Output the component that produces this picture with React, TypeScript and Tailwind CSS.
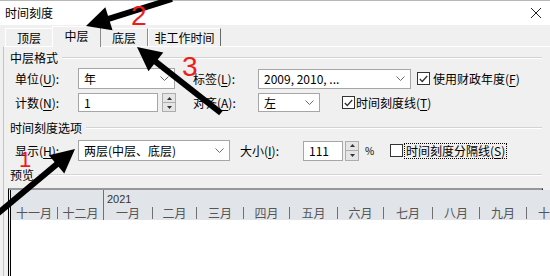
import React from "react";

const LABEL = "w-[63px] shrink-0 whitespace-nowrap text-[12px] leading-none text-black";

const MONTHS = [
  { t: "十一月", w: 46 },
  { t: "十二月", w: 46 },
  { t: "一月", w: 49, year: "2021" },
  { t: "二月", w: 44 },
  { t: "三月", w: 47 },
  { t: "四月", w: 46 },
  { t: "五月", w: 48 },
  { t: "六月", w: 46 },
  { t: "七月", w: 49 },
  { t: "八月", w: 47 },
  { t: "九月", w: 47 },
  { t: "十月", w: 47 },
];

function U({ c }: { c: string }) {
  return <span className="underline underline-offset-2">{c}</span>;
}

function Chevron() {
  return (
    <svg width="9" height="5" viewBox="0 0 9 5" className="shrink-0">
      <polyline points="0.5,0.5 4.5,4.5 8.5,0.5" fill="none" stroke="#6a6a6a" strokeWidth="1" />
    </svg>
  );
}

function Combo({ className, text }: { className: string; text: string }) {
  return (
    <div className={`flex shrink-0 items-center justify-between border border-[#a6a6a6] bg-white px-[5px] ${className}`}>
      <span className="whitespace-nowrap text-[12px] leading-none text-black">{text}</span>
      <Chevron />
    </div>
  );
}

function Spin({ className }: { className: string }) {
  return (
    <div className={`flex shrink-0 flex-col border border-[#adadad] bg-[#e5e5e5] ${className}`}>
      <div className="flex flex-1 items-center justify-center border-b border-[#adadad]">
        <svg width="5" height="3" viewBox="0 0 5 3">
          <polygon points="2.5,0 5,3 0,3" fill="#333" />
        </svg>
      </div>
      <div className="flex flex-1 items-center justify-center">
        <svg width="5" height="3" viewBox="0 0 5 3">
          <polygon points="0,0 5,0 2.5,3" fill="#333" />
        </svg>
      </div>
    </div>
  );
}

function Check({ checked, className }: { checked?: boolean; className: string }) {
  return (
    <span className={`flex h-[13px] w-[13px] shrink-0 items-center justify-center border border-[#333] bg-white ${className}`}>
      {checked && (
        <svg width="9" height="8" viewBox="0 0 9 8">
          <polyline points="0.8,4 3.3,6.5 8.2,1" fill="none" stroke="#333" strokeWidth="1.3" />
        </svg>
      )}
    </span>
  );
}

function GroupTitle({ text, className }: { text: string; className: string }) {
  return (
    <div className={`flex h-[14px] items-center pl-[6px] pr-[8px] ${className}`}>
      <span className="whitespace-nowrap text-[12px] leading-none text-black">{text}</span>
      <div className="ml-[4px] h-[2px] flex-1 border-t border-[#d3d3d3] bg-white" />
    </div>
  );
}

function Arrow({ x1, y1, x2, y2 }: { x1: number; y1: number; x2: number; y2: number }) {
  const dx = x2 - x1;
  const dy = y2 - y1;
  const len = Math.hypot(dx, dy);
  const ux = dx / len;
  const uy = dy / len;
  const hl = 24;
  const hw = 12;
  const bx = x2 - ux * hl;
  const by = y2 - uy * hl;
  const px = -uy;
  const py = ux;
  const pts = `${x2},${y2} ${bx + px * hw},${by + py * hw} ${bx - px * hw},${by - py * hw}`;
  return (
    <g>
      <line x1={x1} y1={y1} x2={bx + ux * 2} y2={by + uy * 2} stroke="#000" strokeWidth="6" />
      <polygon points={pts} fill="#000" />
    </g>
  );
}

export default function App() {
  return (
    <div className="relative flex h-[276px] w-[550px] flex-col overflow-hidden bg-[#f0f0f0] font-['Noto_Sans_CJK_SC',sans-serif]">
      {/* Title bar */}
      <div className="flex h-[25px] shrink-0 items-center justify-between border-t border-[#b8b8b8] bg-white pl-[5px] pr-[9px]">
        <span className="text-[12px] leading-none text-black">时间刻度</span>
        <svg width="10" height="10" viewBox="0 0 10 10">
          <line x1="0" y1="0" x2="10" y2="10" stroke="#222" strokeWidth="1" />
          <line x1="10" y1="0" x2="0" y2="10" stroke="#222" strokeWidth="1" />
        </svg>
      </div>

      {/* Tabs */}
      <div className="relative z-10 flex h-[21px] shrink-0 items-end pl-[5px]">
        <div className="flex h-[18px] w-[47px] items-center justify-center border-l border-t border-white text-[12px] leading-none text-black">
          顶层
        </div>
        <div className="-mb-px flex h-[21px] w-[49px] items-start justify-center border-l border-t border-r border-white border-r-[#8c8c8c] bg-[#f0f0f0] pt-[3px] text-[12px] leading-none text-black">
          中层
        </div>
        <div className="flex h-[18px] w-[47px] items-center justify-center border-t border-r border-white border-r-[#8c8c8c] text-[12px] leading-none text-black">
          底层
        </div>
        <div className="flex h-[18px] w-[73px] items-center justify-center border-l border-t border-r border-white border-r-[#696969] text-[12px] leading-none text-black">
          非工作时间
        </div>
      </div>

      {/* Tab panel */}
      <div className="ml-[3px] flex flex-1 flex-col border-l border-t border-[#c4c4c4] border-t-white">
        <GroupTitle text="中层格式" className="mt-[4px]" />

        <div className="mt-[3px] flex h-[21px] items-center pl-[11px]">
          <span className={LABEL}>
            单位(<U c="U" />):
          </span>
          <Combo className="h-[21px] w-[97px]" text="年" />
          <span className="ml-[18px] w-[65px] shrink-0 whitespace-nowrap text-[12px] leading-none text-black">
            标签(<U c="L" />):
          </span>
          <Combo className="h-[20px] w-[153px]" text="2009, 2010, ..." />
          <Check checked className="ml-[6px]" />
          <span className="ml-[3px] whitespace-nowrap text-[12px] leading-none text-black">
            使用财政年度(<U c="F" />)
          </span>
        </div>

        <div className="mt-[4px] flex h-[19px] items-center pl-[11px]">
          <span className={LABEL}>
            计数(<U c="N" />):
          </span>
          <div className="flex h-[19px] w-[80px] shrink-0 items-center border border-[#a6a6a6] bg-white px-[5px] text-[12px] leading-none text-black">
            1
          </div>
          <Spin className="ml-[4px] h-[19px] w-[14px]" />
          <span className="ml-[17px] w-[65px] shrink-0 whitespace-nowrap text-[12px] leading-none text-black">
            对齐(<U c="A" />):
          </span>
          <Combo className="h-[19px] w-[62px]" text="左" />
          <Check checked className="ml-[22px]" />
          <span className="ml-[1px] whitespace-nowrap text-[12px] leading-none text-black">
            时间刻度线(<U c="T" />)
          </span>
        </div>

        <GroupTitle text="时间刻度选项" className="mt-[9px]" />

        <div className="mt-[5px] flex h-[21px] items-center pl-[11px]">
          <span className={LABEL}>
            显示(<U c="H" />):
          </span>
          <Combo className="h-[21px] w-[152px]" text="两层(中层、底层)" />
          <span className="ml-[10px] w-[63px] shrink-0 whitespace-nowrap text-[12px] leading-none text-black">
            大小(<U c="I" />):
          </span>
          <div className="flex h-[20px] w-[40px] shrink-0 items-center border border-[#a6a6a6] bg-white px-[5px] text-[12px] leading-none text-black">
            111
          </div>
          <Spin className="ml-[2px] h-[20px] w-[14px]" />
          <span className="ml-[6px] w-[8px] shrink-0 text-[10px] leading-none text-black">%</span>
          <Check className="ml-[17px]" />
          <span className="ml-[1px] whitespace-nowrap border border-dotted border-black px-px py-px text-[12px] leading-none text-black">
            时间刻度分隔线(<U c="S" />)
          </span>
        </div>

        <GroupTitle text="预览" className="mt-[7px]" />

        {/* Preview */}
        <div className="ml-[4px] mr-[7px] mt-[6px] flex flex-1 border-l border-r border-t-2 border-black border-t-[#979797] pl-px">
          <div className="flex flex-1 flex-col border-l border-black bg-white">
            <div className="flex h-[30px] shrink-0 overflow-hidden bg-[#e1e4e9]">
              {MONTHS.map((m, i) => (
                <div
                  key={i}
                  style={{ width: m.w }}
                  className={`flex shrink-0 flex-col ${m.year ? "border-l border-[#707070]" : ""}`}
                >
                  <div className="flex h-[15px] items-end pl-[3px]">
                    {m.year && (
                      <span className="font-['Liberation_Sans',sans-serif] text-[11px] leading-none text-[#333]">
                        {m.year}
                      </span>
                    )}
                  </div>
                  <div className="flex h-[15px] items-center">
                    {i > 0 && !m.year && <span className="h-[12px] w-px shrink-0 bg-[#707070]" />}
                    <span className="flex-1 whitespace-nowrap text-center text-[12px] leading-none text-[#555]">
                      {m.t}
                    </span>
                  </div>
                </div>
              ))}
            </div>
            <div className="flex-1 bg-white" />
          </div>
        </div>
      </div>

      {/* Annotations */}
      <svg className="pointer-events-none absolute left-0 top-0 z-20" width="550" height="276">
        <Arrow x1={172} y1={-1} x2={86} y2={26} />
        <Arrow x1={221} y1={113} x2={137} y2={47} />
        <Arrow x1={-10} y1={220} x2={75} y2={149} />
      </svg>
      <span className="pointer-events-none absolute left-[131px] top-[2px] z-30 font-['Liberation_Sans',sans-serif] text-[28px] leading-none text-[#f01c1c]">
        2
      </span>
      <span className="pointer-events-none absolute left-[182px] top-[53px] z-30 font-['Liberation_Sans',sans-serif] text-[28px] leading-none text-[#f01c1c]">
        3
      </span>
      <span className="pointer-events-none absolute left-[19px] top-[149px] z-30 font-['Liberation_Sans',sans-serif] text-[22px] leading-none text-[#f01c1c]">
        1
      </span>
    </div>
  );
}
